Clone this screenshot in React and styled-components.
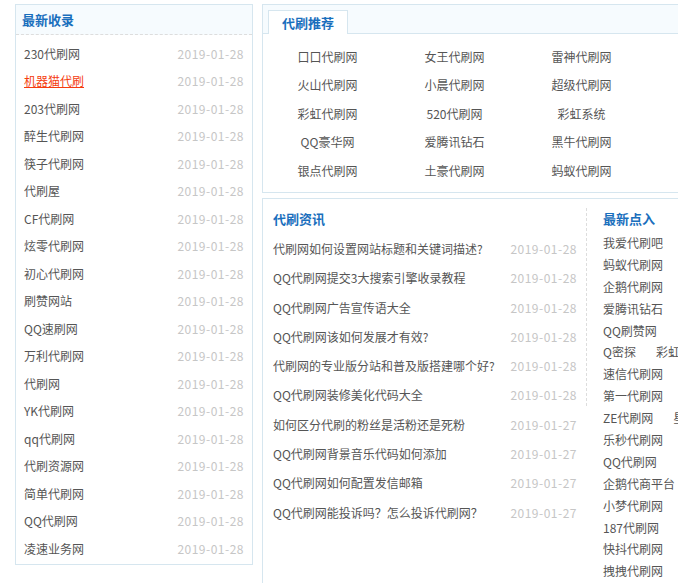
import React from "react";
import styled, { createGlobalStyle } from "styled-components";

const GlobalStyle = createGlobalStyle`
  html, body {
    margin: 0;
    padding: 0;
    overflow: hidden;
    background: #fff;
  }
  body {
    font-family: "Noto Sans CJK SC", "Noto Sans", sans-serif;
    font-size: 12px;
    color: #555;
  }
`;

const Page = styled.div`
  display: flex;
  align-items: flex-start;
  padding: 4px 0 0 15px;
  width: 1000px;
`;

const Box = styled.section`
  box-sizing: border-box;
  border: 1px solid #d6e6ef;
  background: #fff;
`;

const LeftBox = styled(Box)`
  width: 238px;
  height: 561px;
  flex-shrink: 0;
`;

const BoxHead = styled.div`
  height: 29px;
  line-height: 30px;
  padding: 0 6px;
  background: #f6fbfe;
  border-bottom: 1px dashed #ddd;
`;

const Title = styled.h3`
  margin: 0 0 ${(p) => p.$gap || 0}px;
  font-size: 13px;
  font-weight: bold;
  color: #1a6fbd;
  line-height: 22px;
`;

const HeadTitle = styled(Title)`
  line-height: inherit;
`;

const DateList = styled.ul`
  list-style: none;
  margin: 0;
  padding: ${(p) => p.$pad || "0"};
`;

const DateRow = styled.li`
  display: flex;
  justify-content: space-between;
  height: ${(p) => p.$h}px;
  line-height: ${(p) => p.$h}px;
  white-space: nowrap;
`;

const Name = styled.a`
  color: ${(p) => (p.$hot ? "#f53c0f" : "#555")};
  text-decoration: ${(p) => (p.$hot ? "underline" : "none")};
  cursor: pointer;
`;

const When = styled.span`
  color: #c6c6c6;
  letter-spacing: 0.5px;
`;

const RightCol = styled.div`
  width: 510px;
  margin-left: 9px;
  flex-shrink: 0;
  display: flex;
  flex-direction: column;
  gap: 5px;
`;

const TabBar = styled.div`
  height: 28px;
  display: flex;
  align-items: flex-end;
  padding-left: 5px;
  background: #f6fbfe;
  border-bottom: 1px solid #d6e6ef;
`;

const Tab = styled.div`
  height: 23px;
  line-height: 23px;
  padding: 0 13px;
  margin-bottom: -1px;
  background: #fff;
  border: 1px solid #d6e6ef;
  border-bottom: none;
  font-size: 13px;
  font-weight: bold;
  color: #1a6fbd;
`;

const LinkGrid = styled.div`
  display: grid;
  grid-template-columns: repeat(3, 127px);
  grid-auto-rows: 28.5px;
  padding: 8.5px 0 7px 1px;
`;

const GridLink = styled.a`
  text-align: center;
  line-height: 28.5px;
  color: #555;
  white-space: nowrap;
`;

const NewsBox = styled(Box)`
  height: 420px;
  display: flex;
  align-items: flex-start;
  padding: 9px 0 0 10px;
`;

const News = styled.div`
  width: 304px;
  flex-shrink: 0;
`;

const Recent = styled.div`
  height: 198px;
  margin-left: 9px;
  padding-left: 16px;
  border-left: 1px dashed #ddd;
  width: 160px;
  flex-shrink: 0;
`;

const RecentRow = styled.div`
  display: flex;
  gap: 20px;
  height: 21.9px;
  line-height: 21.9px;
  white-space: nowrap;
`;

const latest = [
  "230代刷网",
  "机器猫代刷",
  "203代刷网",
  "醉生代刷网",
  "筷子代刷网",
  "代刷屋",
  "CF代刷网",
  "炫零代刷网",
  "初心代刷网",
  "刷赞网站",
  "QQ速刷网",
  "万利代刷网",
  "代刷网",
  "YK代刷网",
  "qq代刷网",
  "代刷资源网",
  "简单代刷网",
  "QQ代刷网",
  "凌速业务网",
];

const picks = [
  "口口代刷网", "女王代刷网", "雷神代刷网",
  "火山代刷网", "小晨代刷网", "超级代刷网",
  "彩虹代刷网", "520代刷网", "彩虹系统",
  "QQ豪华网", "爱腾讯钻石", "黑牛代刷网",
  "银点代刷网", "土豪代刷网", "蚂蚁代刷网",
];

const news = [
  ["代刷网如何设置网站标题和关键词描述?", "2019-01-28"],
  ["QQ代刷网提交3大搜索引擎收录教程", "2019-01-28"],
  ["QQ代刷网广告宣传语大全", "2019-01-28"],
  ["QQ代刷网该如何发展才有效?", "2019-01-28"],
  ["代刷网的专业版分站和普及版搭建哪个好?", "2019-01-28"],
  ["QQ代刷网装修美化代码大全", "2019-01-28"],
  ["如何区分代刷的粉丝是活粉还是死粉", "2019-01-27"],
  ["QQ代刷网背景音乐代码如何添加", "2019-01-27"],
  ["QQ代刷网如何配置发信邮箱", "2019-01-27"],
  ["QQ代刷网能投诉吗？怎么投诉代刷网？", "2019-01-27"],
];

// rows as they wrap in the narrow side column
const recent = [
  ["我爱代刷吧"],
  ["蚂蚁代刷网"],
  ["企鹅代刷网"],
  ["爱腾讯钻石"],
  ["QQ刷赞网"],
  ["Q密探", "彩虹代刷"],
  ["速信代刷网"],
  ["第一代刷网"],
  ["ZE代刷网", "星辰网"],
  ["乐秒代刷网"],
  ["QQ代刷网"],
  ["企鹅代商平台"],
  ["小梦代刷网"],
  ["187代刷网"],
  ["快抖代刷网"],
  ["拽拽代刷网"],
];

export default function App() {
  return (
    <>
      <GlobalStyle />
      <Page>
        <LeftBox>
          <BoxHead>
            <HeadTitle>最新收录</HeadTitle>
          </BoxHead>
          <DateList $pad="4.5px 8px 0">
            {latest.map((name, i) => (
              <DateRow key={name + i} $h={27.5}>
                <Name $hot={i === 1}>{name}</Name>
                <When>2019-01-28</When>
              </DateRow>
            ))}
          </DateList>
        </LeftBox>

        <RightCol>
          <Box>
            <TabBar>
              <Tab>代刷推荐</Tab>
            </TabBar>
            <LinkGrid>
              {picks.map((p) => (
                <GridLink key={p}>{p}</GridLink>
              ))}
            </LinkGrid>
          </Box>

          <NewsBox>
            <News>
              <Title $gap={4}>代刷资讯</Title>
              <DateList>
                {news.map(([t, d]) => (
                  <DateRow key={t} $h={29.3}>
                    <Name>{t}</Name>
                    <When>{d}</When>
                  </DateRow>
                ))}
              </DateList>
            </News>
            <Recent>
              <Title $gap={2}>最新点入</Title>
              {recent.map((row, i) => (
                <RecentRow key={i}>
                  {row.map((n) => (
                    <Name key={n}>{n}</Name>
                  ))}
                </RecentRow>
              ))}
            </Recent>
          </NewsBox>
        </RightCol>
      </Page>
    </>
  );
}
